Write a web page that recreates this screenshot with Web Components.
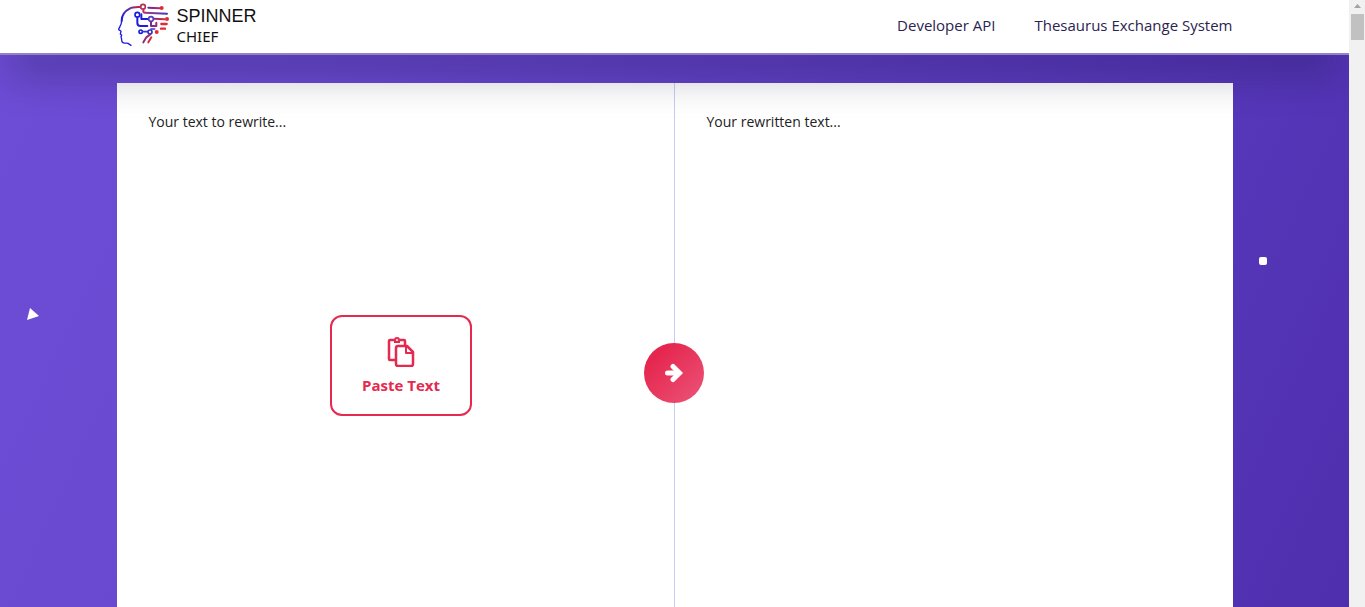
<!DOCTYPE html>
<html lang="en">
	<head>
		<meta charset="utf-8">
		<title>Spinner Chief</title>
		<meta name="viewport" content="width=device-width, initial-scale=1.0">

		<style type="text/css">
			body {
				--brand: #e5294f;
				--ink: #2c2350;
				display: grid;
				grid-template-columns: minmax(0, 1fr) 16px;
				height: 100vh;
				margin: 0;
				overflow: hidden;
				font-family: "Open Sans", "Noto Sans", sans-serif;
			}

			.page {
				display: flex;
				flex-direction: column;
				min-width: 0;
				overflow: hidden;
			}
		</style>
	</head>
	<body>

		<div class="page">
			<site-header>
				<site-logo slot="logo"></site-logo>
				<nav-link href="#api">Developer API</nav-link>
				<nav-link href="#thesaurus">Thesaurus Exchange System</nav-link>
			</site-header>

			<rewrite-stage>
				<text-pane label="Your text to rewrite...">
					<paste-button>Paste Text</paste-button>
				</text-pane>
				<text-pane label="Your rewritten text..." readonly></text-pane>
				<rewrite-button slot="action"></rewrite-button>
			</rewrite-stage>
		</div>

		<page-scrollbar></page-scrollbar>


		<script>
			/**
			 * Base class that renders a template string into an open shadow root
			 */
			class BaseElement extends HTMLElement {

				constructor () {
					super();
					this.root = this.attachShadow({mode: 'open'});
					this.root.innerHTML = this.template();
				}

				template () {
					return '<slot></slot>';
				}

			}

			class SiteLogo extends BaseElement {

				template () {
					return `
						<style>
							:host {
								display: block;
							}

							a {
								color: #111;
								display: flex;
								gap: 7px;
								text-decoration: none;
							}

							svg {
								display: block;
								height: 44px;
								width: 53px;
							}

							.name {
								display: flex;
								flex-direction: column;
								font: 18px/22px "Liberation Sans", Arial, sans-serif;
								padding-top: 2px;
							}

							.name span + span {
								font: 15px/18px "Noto Sans", sans-serif;
							}
						</style>
						<a href="#home">
							<svg viewBox="21 9 159 132" fill="none" stroke-width="5" stroke-linecap="round" stroke-linejoin="round" aria-hidden="true">
								<defs>
									<linearGradient id="head" gradientUnits="userSpaceOnUse" x1="38" y1="60" x2="92" y2="20">
										<stop offset="0" stop-color="#1d1ddd"/>
										<stop offset=".5" stop-color="#5b2cae"/>
										<stop offset="1" stop-color="#c92a45"/>
									</linearGradient>
									<linearGradient id="wire" gradientUnits="userSpaceOnUse" x1="95" y1="0" x2="170" y2="0">
										<stop offset="0" stop-color="#3c28c4"/>
										<stop offset="1" stop-color="#e02b36"/>
									</linearGradient>
									<linearGradient id="top" gradientUnits="userSpaceOnUse" x1="88" y1="0" x2="172" y2="0">
										<stop offset="0" stop-color="#c03054"/>
										<stop offset=".5" stop-color="#7e3b9f"/>
										<stop offset="1" stop-color="#3a3abf"/>
									</linearGradient>
								</defs>
								<path stroke="url(#head)" stroke-width="6" d="M91 21C77 21 68 20 59 26C43 34 35 49 35 63"/>
								<path stroke="#1d1ddd" stroke-width="4" d="M35 63C35 73 28 82 26 88C26 91 31 91 33 94L31 102L35 106L33 111C36 117 34 123 37 127C42 132 48 128 54 130L63 136"/>
								<circle cx="99" cy="20" r="7" stroke="#b92f55"/>
								<path stroke="url(#top)" stroke-width="6" d="M100 28V34Q100 38 105 38L171 41"/>
								<path stroke="url(#wire)" stroke-width="6" d="M115 23L150 25"/>
								<circle cx="155" cy="24" r="6" fill="#e02b36"/>
								<circle cx="82" cy="44" r="7" stroke="#1d1ddd"/>
								<path stroke="#1d1ddd" stroke-width="6" d="M82 52V68Q82 78 91 78H112M94 57V43M94 57H113"/>
								<circle cx="123" cy="57" r="7" stroke="#4c43c0"/>
								<path stroke="url(#wire)" stroke-width="6" d="M132 56L164 58M123 65V78H138M139 68V78"/>
								<circle cx="171" cy="57" r="6" fill="#e02b36"/>
								<path stroke="#e02b36" stroke-width="7" d="M154 72H170M153 86H165"/>
								<circle cx="92" cy="95" r="5" stroke="#1d1ddd"/>
								<path stroke="#303bd0" d="M99 95H112M123 87H134"/>
								<circle cx="120" cy="96" r="6" stroke="#3430c9"/>
								<circle cx="140" cy="96" r="6" fill="#e02b36"/>
								<path stroke="#8a3077" stroke-width="6" d="M120 104L109 112L100 127"/>
								<path stroke="#d52c43" stroke-width="6" d="M124 112L115 127"/>
							</svg>
							<span class="name"><span>SPINNER</span><span>CHIEF</span></span>
						</a>`;
				}

			}

			class NavLink extends BaseElement {

				template () {
					return `
						<style>
							:host {
								display: block;
							}

							a {
								color: var(--ink);
								font-size: 15px;
								line-height: 24px;
								text-decoration: none;
							}
						</style>
						<a><slot></slot></a>`;
				}

				connectedCallback () {
					this.root.querySelector('a').href = this.getAttribute('href');
				}

			}

			class SiteHeader extends BaseElement {

				template () {
					return `
						<style>
							:host {
								background: #fff;
								border-bottom: 2px solid #9482c6;
								box-shadow: 0 30px 40px -10px rgba(15, 10, 50, .3);
								box-sizing: border-box;
								display: block;
								flex: none;
								position: relative;
								z-index: 1;
							}

							header {
								align-items: center;
								display: flex;
								justify-content: space-between;
								margin: 0 auto;
								max-width: 1116px;
								min-height: 53px;
							}

							slot[name="logo"]::slotted(*) {
								padding-bottom: 4px;
							}

							nav {
								display: flex;
								gap: 39px;
								padding-bottom: 4px;
							}
						</style>
						<header>
							<slot name="logo"></slot>
							<nav aria-label="Main"><slot></slot></nav>
						</header>`;
				}

			}

			class TextPane extends BaseElement {

				template () {
					return `
						<style>
							:host {
								box-sizing: border-box;
								display: grid;
								padding: 28px 20px 43px 32px;
							}

							.field,
							::slotted(*) {
								grid-area: 1 / 1;
							}

							.field {
								display: flex;
								flex-direction: column;
							}

							::slotted(*) {
								place-self: center;
							}

							label {
								color: #222;
								font-size: 14px;
								line-height: 22px;
							}

							textarea {
								background: none;
								border: 0;
								flex: 1;
								font: inherit;
								outline: 0;
								padding: 0;
								resize: none;
							}
						</style>
						<div class="field">
							<label for="text"></label>
							<textarea id="text"></textarea>
						</div>
						<slot></slot>`;
				}

				connectedCallback () {
					this.root.querySelector('label').textContent = this.getAttribute('label');
					this.root.querySelector('textarea').readOnly = this.hasAttribute('readonly');
				}

			}

			class PasteButton extends BaseElement {

				template () {
					return `
						<style>
							:host {
								display: block;
							}

							button {
								align-items: center;
								background: #fff;
								border: 2px solid var(--brand);
								border-radius: 12px;
								color: var(--brand);
								cursor: pointer;
								display: flex;
								flex-direction: column;
								font: bold 15px/22px "Open Sans", sans-serif;
								gap: 7px;
								padding: 20px 30px 18px;
							}

							svg {
								display: block;
								height: 30px;
								width: 28px;
							}
						</style>
						<button type="button">
							<svg viewBox="0 0 28 30" fill="none" stroke="currentColor" stroke-width="2.500" stroke-linejoin="round" aria-hidden="true">
								<path d="M9 23H3Q2 23 2 22V4Q2 3 3 3H7.500M12.500 3H17Q18 3 18 4V8"/>
								<circle cx="10" cy="3" r="2" stroke-width="2"/>
								<path d="M7 5H13" stroke-width="2"/>
								<path d="M11 9H20L26 15V27Q26 29 24 29H11Q9 29 9 27V11Q9 9 11 9Z"/>
								<path d="M19 9V16H26" stroke-width="2"/>
							</svg>
							<slot></slot>
						</button>`;
				}

			}

			class RewriteButton extends BaseElement {

				template () {
					return `
						<style>
							:host {
								display: block;
							}

							button {
								background: linear-gradient(135deg, #e5264f 20%, #ec5578);
								border: 0;
								border-radius: 50%;
								color: #fff;
								cursor: pointer;
								display: grid;
								height: 60px;
								padding: 0;
								place-items: center;
								width: 60px;
							}

							svg {
								height: 20px;
								width: 20px;
							}
						</style>
						<button type="button" aria-label="Rewrite">
							<svg viewBox="0 0 20 20" fill="none" stroke="currentColor" stroke-width="5" aria-hidden="true">
								<path d="M3.500 10H14" stroke-linecap="round"/>
								<path d="M9 3.500L15.500 10L9 16.500" stroke-linecap="round"/>
							</svg>
						</button>`;
				}

			}

			class RewriteStage extends BaseElement {

				template () {
					return `
						<style>
							:host {
								background: linear-gradient(115deg, #6d4dd5, #6a4ad1 20%, #5536b8 80%, #4e2eac);
								display: block;
								flex: 1;
								padding-top: 28px;
								position: relative;
							}

							.panes {
								background: #fff;
								display: grid;
								grid-template-columns: 1fr 1fr;
								margin: 0 auto;
								max-width: 1116px;
								min-height: 580px;
								position: relative;
							}

							::slotted(text-pane:not([readonly])) {
								border-right: 1px solid #c3d0f5;
							}

							/* Centred on the divider, the last pixel of the left half */
							.action {
								left: calc(50% - 1px);
								position: absolute;
								top: 50%;
								transform: translate(-50%, -50%);
							}

							.shape {
								fill: #fff;
								position: absolute;
							}

							.triangle {
								left: 26px;
								top: 253px;
							}

							.square {
								right: 82px;
								top: 202px;
							}
						</style>
						<svg class="shape triangle" width="14" height="14" aria-hidden="true"><path d="M4 0L13 8L1 12Z"/></svg>
						<svg class="shape square" width="8" height="8" aria-hidden="true"><rect width="8" height="8" rx="2"/></svg>
						<main class="panes">
							<slot></slot>
							<div class="action"><slot name="action"></slot></div>
						</main>`;
				}

			}

			class PageScrollbar extends BaseElement {

				template () {
					return `
						<style>
							:host {
								align-items: center;
								background: #f1f1f1;
								display: flex;
								flex-direction: column;
							}

							svg {
								display: block;
								fill: #a3a3a3;
								height: 14px;
								width: 16px;
							}

							.thumb {
								align-self: stretch;
								background: #c1c1c1;
								height: 26px;
								margin: 0 1px 0 2px;
							}
						</style>
						<svg viewBox="0 0 16 14" aria-hidden="true"><path d="M5 8L8.500 4L12 8Z"/></svg>
						<div class="thumb"></div>`;
				}

			}

			customElements.define('site-logo', SiteLogo);
			customElements.define('nav-link', NavLink);
			customElements.define('site-header', SiteHeader);
			customElements.define('text-pane', TextPane);
			customElements.define('paste-button', PasteButton);
			customElements.define('rewrite-button', RewriteButton);
			customElements.define('rewrite-stage', RewriteStage);
			customElements.define('page-scrollbar', PageScrollbar);
		</script>
	</body>
</html>
